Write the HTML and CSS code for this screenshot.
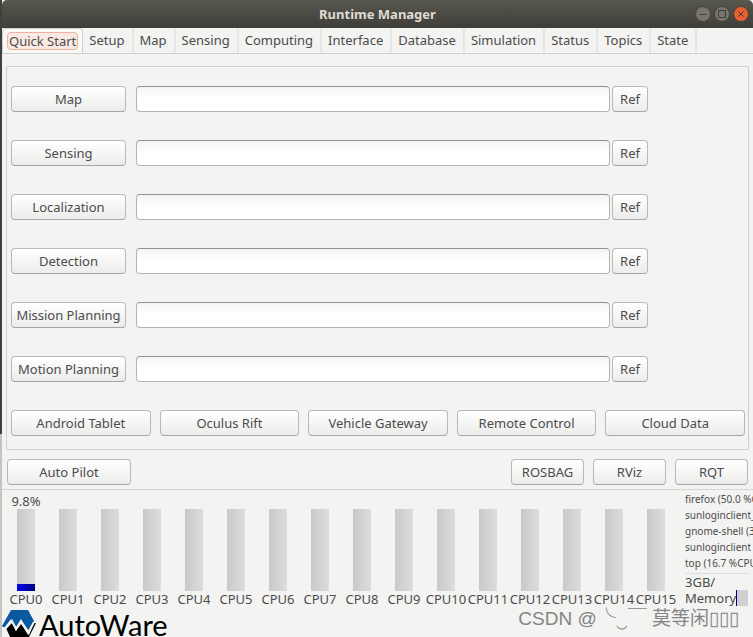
FILE: index.html
```html
<!DOCTYPE html>
<html lang="en">
<head>
<meta charset="utf-8">
<title>Runtime Manager</title>
<link rel="stylesheet" href="styles.css">
</head>
<body>
<div class="window">
  <header class="titlebar">
    <h1>Runtime Manager</h1>
    <div class="controls">
      <button class="control" aria-label="Minimize"><svg viewBox="0 0 14 14"><path d="M3.500 7.500h7"/></svg></button>
      <button class="control" aria-label="Maximize"><svg viewBox="0 0 14 14"><path d="M3.500 3.500h7v7h-7z"/></svg></button>
      <button class="control close" aria-label="Close"><svg viewBox="0 0 14 14"><path d="M4.500 4.500l5 5m0-5l-5 5"/></svg></button>
    </div>
  </header>
  <nav class="tabs">
    <button class="tab active"><span>Quick Start</span></button>
    <button class="tab">Setup</button>
    <button class="tab">Map</button>
    <button class="tab">Sensing</button>
    <button class="tab">Computing</button>
    <button class="tab">Interface</button>
    <button class="tab">Database</button>
    <button class="tab">Simulation</button>
    <button class="tab">Status</button>
    <button class="tab">Topics</button>
    <button class="tab">State</button>
  </nav>
  <main class="page">
    <section class="panel">
      <div class="row"><button class="btn">Map</button><input class="field" type="text" aria-label="Map file"><button class="btn">Ref</button></div>
      <div class="row"><button class="btn">Sensing</button><input class="field" type="text" aria-label="Sensing file"><button class="btn">Ref</button></div>
      <div class="row"><button class="btn">Localization</button><input class="field" type="text" aria-label="Localization file"><button class="btn">Ref</button></div>
      <div class="row"><button class="btn">Detection</button><input class="field" type="text" aria-label="Detection file"><button class="btn">Ref</button></div>
      <div class="row"><button class="btn">Mission Planning</button><input class="field" type="text" aria-label="Mission Planning file"><button class="btn">Ref</button></div>
      <div class="row"><button class="btn">Motion Planning</button><input class="field" type="text" aria-label="Motion Planning file"><button class="btn">Ref</button></div>
      <div class="launchers">
        <button class="btn">Android Tablet</button>
        <button class="btn">Oculus Rift</button>
        <button class="btn">Vehicle Gateway</button>
        <button class="btn">Remote Control</button>
        <button class="btn">Cloud Data</button>
      </div>
    </section>
    <div class="tools">
      <button class="btn pilot">Auto Pilot</button>
      <button class="btn tool">ROSBAG</button>
      <button class="btn tool">RViz</button>
      <button class="btn tool">RQT</button>
    </div>
  </main>
  <section class="monitor">
    <div class="cpus">
      <div class="cpu"><span>9.8%</span><i class="bar"><b class="load"></b></i><span>CPU0</span></div>
      <div class="cpu"><span></span><i class="bar"></i><span>CPU1</span></div>
      <div class="cpu"><span></span><i class="bar"></i><span>CPU2</span></div>
      <div class="cpu"><span></span><i class="bar"></i><span>CPU3</span></div>
      <div class="cpu"><span></span><i class="bar"></i><span>CPU4</span></div>
      <div class="cpu"><span></span><i class="bar"></i><span>CPU5</span></div>
      <div class="cpu"><span></span><i class="bar"></i><span>CPU6</span></div>
      <div class="cpu"><span></span><i class="bar"></i><span>CPU7</span></div>
      <div class="cpu"><span></span><i class="bar"></i><span>CPU8</span></div>
      <div class="cpu"><span></span><i class="bar"></i><span>CPU9</span></div>
      <div class="cpu"><span></span><i class="bar"></i><span>CPU10</span></div>
      <div class="cpu"><span></span><i class="bar"></i><span>CPU11</span></div>
      <div class="cpu"><span></span><i class="bar"></i><span>CPU12</span></div>
      <div class="cpu"><span></span><i class="bar"></i><span>CPU13</span></div>
      <div class="cpu"><span></span><i class="bar"></i><span>CPU14</span></div>
      <div class="cpu"><span></span><i class="bar"></i><span>CPU15</span></div>
    </div>
    <aside class="side">
      <ul class="processes">
        <li>firefox (50.0 %CPU)</li>
        <li>sunloginclient_</li>
        <li>gnome-shell (33</li>
        <li>sunloginclient (</li>
        <li>top (16.7 %CPU)</li>
      </ul>
      <div class="memory"><span>3GB/<br>Memory</span><i class="gauge"></i></div>
    </aside>
  </section>
  <footer class="brand">
    <svg class="mark" viewBox="0 0 34 28" aria-hidden="true">
      <path fill="#0a5a9f" d="M9 0h17l6 11-5 10-8-11-5 7-5-8-7 9-2-2z"/>
      <path fill="#000" d="M4 18l6-5 4 8 5-7 8 11 5-12h2l-8 16H9z"/>
      <path fill="none" stroke="#f3f3f1" stroke-width="2" d="M1 18l3 0 6-7 4 8 5-8 7 12 6-11"/>
    </svg>
    <span class="word">AutoWare</span>
    <span class="watermark">CSDN @╰‿￣ 莫等闲▯▯▯</span>
  </footer>
</div>
</body>
</html>
```

FILE: styles.css
```css
* { box-sizing: border-box; }

body {
  margin: 0;
  background: #f3f3f1;
  color: #4c4c4c;
  font: 13px/18px "Noto Sans", "Noto Sans CJK SC", sans-serif;
  overflow: hidden;
}

button { font: inherit; color: inherit; padding: 0; }

/* The desktop behind the window shows along its left edge. */
.window {
  padding-left: 2px;
  background: linear-gradient(#423f40 68%, #c4c4c2 68%) left / 2px 100% no-repeat;
}

.titlebar {
  display: grid;
  grid-template-columns: 1fr auto 1fr;
  align-items: center;
  height: 28px;
  padding: 0 4px;
  border-radius: 5px 5px 0 0;
  background: linear-gradient(#59584e, #3e3d39);
  color: #dfdbd2;
}
.titlebar h1 { grid-column: 2; margin: 0; font-size: 13px; line-height: 16px; }
.controls { display: flex; gap: 3px; justify-content: flex-end; }
.control {
  width: 16px;
  height: 16px;
  border: 1px solid #45443e;
  border-radius: 50%;
  background: #77756c;
}
.control svg { display: block; width: 14px; height: 14px; fill: none; stroke: #3d3c37; stroke-width: 1; }
.close { background: #e9602f; }

.tabs { display: flex; height: 26px; border-bottom: 1px solid #cfcfcd; }
.tab { padding: 0 7px 1px 6px; border: 0; border-right: 2px solid #e6e6e4; background: none; }
.tab.active { border: 1px solid #cfcfcd; border-bottom: 0; border-radius: 4px 4px 0 0; background: #f8f8f7; padding: 0 4px; }
.tab span { display: block; padding: 0 1px; border: 1px solid #eeb19d; border-radius: 4px; background: #fae9e3; line-height: 16px; }

.page { padding: 12px 4px 4px; border-bottom: 1px solid #d5d5d3; }
.panel {
  display: grid;
  gap: 28px;
  padding: 19px 3px 13px 4px;
  border: 1px solid #cfcfcd;
  border-radius: 2px;
}
.row { display: grid; grid-template-columns: 115px 1fr 36px; gap: 2px; margin-right: 97px; }
.row .field { margin-left: 8px; }
.btn {
  height: 26px;
  border: 1px solid #b9b9b7;
  border-bottom-color: #a5a5a3;
  border-radius: 4px;
  background: linear-gradient(#fff, #ececeb);
  white-space: nowrap;
}
.field {
  min-width: 0;
  height: 26px;
  border: 1px solid #b4b4b2;
  border-top-color: #929290;
  border-radius: 4px;
  background: linear-gradient(#f4f4f4, #fff 50%);
  font: inherit;
}
.launchers { display: grid; grid-template-columns: repeat(5, 1fr); gap: 9px; }
.tools { display: flex; gap: 9px; padding: 9px 1px 0; }
.pilot { width: 124px; margin-right: auto; }
.tool { width: 73px; }

.monitor { display: flex; height: 120px; }
.cpus { flex: none; display: grid; grid-template-columns: repeat(16, 42px); padding: 3px 0 0 3px; }
.cpu { display: grid; grid-template-rows: 16px 82px 16px; justify-items: center; line-height: 16px; white-space: nowrap; }
.bar { display: flex; align-items: end; width: 18px; background: linear-gradient(90deg, #c9c9c9, #dcdcdc); }
.load { width: 100%; height: 7px; background: linear-gradient(90deg, #0000f0, #000080); }
.side { flex: 1; min-width: 0; padding: 1px 3px 0 8px; }
.processes { margin: 0; padding: 0 0 2px; list-style: none; font-size: 10px; line-height: 16px; white-space: nowrap; border-bottom: 1px solid #dededc; }
.memory { display: flex; align-items: end; line-height: 16px; }
.gauge { width: 12px; height: 16px; border-left: 1px solid #000080; background: #d0d0d0; }

.brand { display: flex; align-items: start; height: 28px; color: #000; }
.mark { width: 34px; height: 28px; }
.word { padding-left: 3px; font: 29px/30px Lato, sans-serif; }
.watermark { margin-left: auto; padding-right: 14px; color: #858585; font: 19px/18px "Liberation Sans", "Noto Sans CJK SC", sans-serif; }
```
